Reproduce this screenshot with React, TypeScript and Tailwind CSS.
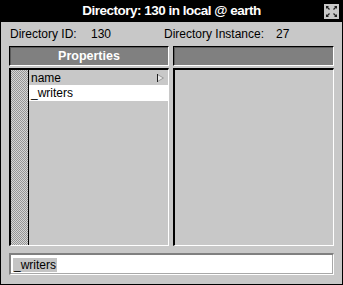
import React from 'react';

const font = { fontFamily: '"Liberation Sans", Arial, sans-serif' };

function CloseButton() {
  return (
    <div className="absolute right-[3px] top-[3px] flex h-[15px] w-[15px] items-center justify-center bg-[#c8c8c8]">
      <svg width="13" height="13" viewBox="0 0 13 13" fill="none">
        <g stroke="#202020" strokeWidth="1.2">
          <line x1="1.5" y1="1.5" x2="4.5" y2="4.5" />
          <line x1="11.5" y1="1.5" x2="8.5" y2="4.5" />
          <line x1="1.5" y1="11.5" x2="4.5" y2="8.5" />
          <line x1="11.5" y1="11.5" x2="8.5" y2="8.5" />
        </g>
        <g fill="#202020">
          <polygon points="1,1 4,1 1,4" />
          <polygon points="12,1 9,1 12,4" />
          <polygon points="1,12 4,12 1,9" />
          <polygon points="12,12 9,12 12,9" />
        </g>
      </svg>
    </div>
  );
}

function HeaderBox({ label }: { label?: string }) {
  return (
    <div className="flex h-[20px] items-center justify-center border-t border-l border-b border-r border-t-black border-l-black border-b-white border-r-white bg-[#808080] text-[12.5px] font-bold text-white shadow-[inset_1px_1px_0_#5a5a5a]">
      {label}
    </div>
  );
}

function SunkenPanel({ children }: { children?: React.ReactNode }) {
  return (
    <div className="flex h-[178px] border-t-2 border-l-2 border-b border-r border-t-black border-l-black border-b-white border-r-white bg-[#c8c8c8]">
      {children}
    </div>
  );
}

function Arrow() {
  return (
    <svg width="7" height="8" viewBox="0 0 7 8">
      <polygon points="0.5,0.5 6.5,4 0.5,7.5" fill="#e8e8e8" stroke="#9a9a9a" strokeWidth="1" />
      <line x1="0.5" y1="0" x2="0.5" y2="8" stroke="#202020" strokeWidth="1" />
    </svg>
  );
}

export default function App() {
  return (
    <div
      className="flex h-[285px] w-[343px] flex-col border border-black bg-[#c8c8c8] text-black"
      style={font}
    >
      <div className="relative flex h-[21px] items-center justify-center bg-black text-[13.5px] font-bold tracking-[-0.5px] text-white">
        Directory: 130 in local @ earth
        <CloseButton />
      </div>

      <div className="mt-[4px] flex h-[16px] items-center pl-[9px] text-[12px] leading-[16px]">
        <span className="w-[81px]">Directory ID:</span>
        <span className="w-[73px]">130</span>
        <span className="w-[112px]">Directory Instance:</span>
        <span>27</span>
      </div>

      <div className="mt-[4px] flex gap-[4px] px-[8px]">
        <div className="w-[160px]">
          <HeaderBox label="Properties" />
        </div>
        <div className="w-[161px]">
          <HeaderBox />
        </div>
      </div>

      <div className="mt-[2px] flex gap-[4px] px-[8px]">
        <div className="w-[160px]">
          <SunkenPanel>
            <div className="w-[18px] border-r border-black bg-[repeating-conic-gradient(#969696_0_25%,#d6d6d6_0_50%)] bg-[length:2px_2px]" />
            <div className="flex flex-1 flex-col text-[12px]">
              <div className="flex h-[15px] items-center justify-between pl-[2px] pr-[4px]">
                <span>name</span>
                <Arrow />
              </div>
              <div className="flex h-[16px] items-center bg-white pl-[2px]">
                <span>_writers</span>
              </div>
            </div>
          </SunkenPanel>
        </div>
        <div className="w-[161px]">
          <SunkenPanel />
        </div>
      </div>

      <div className="mx-[8px] mt-[7px] flex h-[22px] items-center border-t-2 border-l-2 border-b border-r border-t-[#808080] border-l-[#808080] border-b-white border-r-white bg-white pl-[2px] shadow-[inset_-1px_-1px_0_#a8a8a8]">
        <span className="bg-[#c4c4c4] px-[1px] text-[12px] leading-[14px]">_writers</span>
      </div>
    </div>
  );
}
